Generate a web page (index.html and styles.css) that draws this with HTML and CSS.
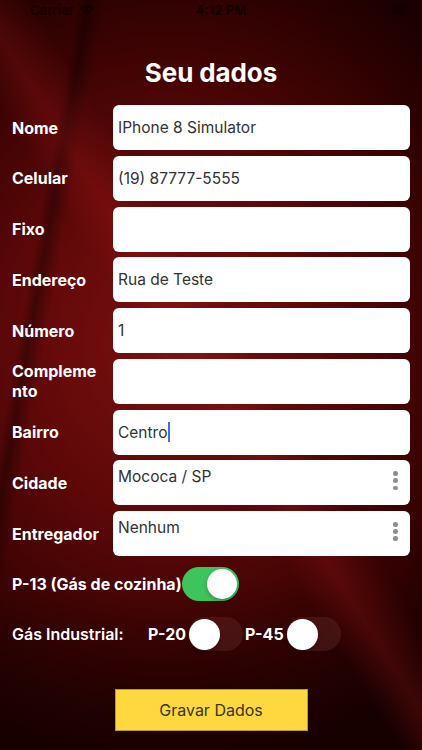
FILE: index.html
```html
<!DOCTYPE html>
<html lang="pt-BR">
<head>
    <meta charset="utf-8">
    <title>Seu dados</title>
    <link rel="stylesheet" href="styles.css">
</head>
<body>
    <div class="screen">
        <div class="status">
            <div class="carrier">Carrier
                <svg width="16" height="12" viewBox="0 0 16 12"><path d="M8 11.5l2.3-2.6a3.3 3.3 0 0 0-4.6 0z M3.9 7l1.3 1.4a4 4 0 0 1 5.6 0L12.1 7a5.9 5.9 0 0 0-8.2 0z M1.1 4.2l1.3 1.4a7.9 7.9 0 0 1 11.2 0l1.3-1.4a9.8 9.8 0 0 0-13.8 0z" fill="#160000"/></svg>
            </div>
            <div class="clock">4:12 PM</div>
            <div class="battery"><span></span></div>
        </div>

        <h2 class="title">Seu dados</h2>

        <div class="row"><label>Nome</label><div class="field">IPhone 8 Simulator</div></div>
        <div class="row"><label>Celular</label><div class="field">(19) 87777-5555</div></div>
        <div class="row"><label>Fixo</label><div class="field"></div></div>
        <div class="row"><label>Endereço</label><div class="field">Rua de Teste</div></div>
        <div class="row"><label>Número</label><div class="field">1</div></div>
        <div class="row"><label>Complemento</label><div class="field"></div></div>
        <div class="row"><label>Bairro</label><div class="field">Centro<i class="caret"></i></div></div>
        <div class="row"><label>Cidade</label><div class="field picker">Mococa / SP<b class="dots"><i></i><i></i><i></i></b></div></div>
        <div class="row"><label>Entregador</label><div class="field picker">Nenhum<b class="dots"><i></i><i></i><i></i></b></div></div>

        <div class="opt first">
            <span class="optlabel">P-13 (Gás de cozinha)</span>
            <span class="switch on"><i></i></span>
        </div>
        <div class="opt">
            <span class="optlabel wide">Gás Industrial:</span>
            <span class="optlabel">P-20</span>
            <span class="switch"><i></i></span>
            <span class="optlabel">P-45</span>
            <span class="switch"><i></i></span>
        </div>

        <div class="actions"><a class="btn">Gravar Dados</a></div>
    </div>
</body>
</html>
```

FILE: styles.css
```css
body { margin: 0; font-family: Inter, "Liberation Sans", sans-serif; }
.screen {
    width: 422px; height: 750px; overflow: hidden; box-sizing: border-box;
    background:
        linear-gradient(58deg, transparent 45%, rgba(170, 25, 25, 0.26) 50%, transparent 56%),
        linear-gradient(100deg, transparent 14%, rgba(0, 0, 0, 0.35) 16%, transparent 19%),
        linear-gradient(180deg, transparent 78%, rgba(20, 0, 0, 0.55) 100%),
        radial-gradient(ellipse 90% 58% at 40% 46%, #7c1010 0%, #5e0808 40%, #360202 75%, #1a0000 100%);
}
.status { height: 20px; display: flex; align-items: center; justify-content: space-between; padding: 0 10px 0 30px; color: #160000; font-size: 13px; font-weight: 600; }
.carrier { display: flex; align-items: center; gap: 5px; width: 120px; }
.clock { font-weight: 700; }
.battery { width: 120px; display: flex; justify-content: flex-end; }
.battery span { width: 18px; height: 8px; border: 1px solid rgba(20, 0, 0, 0.5); border-radius: 2px; background: linear-gradient(90deg, #140000 60%, transparent 60%); }

.title { margin: 38px 0 17px; height: 30px; line-height: 30px; text-align: center; color: #fff; font-size: 26px; font-weight: 700; letter-spacing: -0.1px; }

.row { display: flex; align-items: center; height: 45px; margin-bottom: 5.75px; }
.row label { width: 88px; margin: 0 13px 0 12px; color: #fff; font-size: 16px; font-weight: 700; line-height: 20px; word-break: break-all; }
.field { position: relative; width: 297px; height: 45px; box-sizing: border-box; padding: 0 5px; background: #fff; border-radius: 6px; display: flex; align-items: center; color: #333; font-size: 15.5px; }
.picker { align-items: flex-start; padding-top: 7px; }
.caret { display: inline-block; width: 2px; height: 20px; margin-left: 1px; background: #3d6fe8; }
.dots { position: absolute; right: 12px; top: 11px; display: flex; flex-direction: column; gap: 2.6px; }
.dots i { width: 4.6px; height: 4.6px; border-radius: 50%; background: #8e8e8e; }

.opt { display: flex; align-items: center; height: 34px; padding-left: 12px; margin-top: 16px; color: #fff; font-size: 16px; font-weight: 700; }
.opt.first { margin-top: 11px; }
.optlabel.wide { width: 136px; font-weight: 600; }
.switch { position: relative; width: 55px; height: 34px; border-radius: 17px; margin: 0 2px; background: rgba(110, 50, 50, 0.35); }
.switch i { position: absolute; left: 1px; top: 2px; width: 31px; height: 31px; border-radius: 50%; background: #fff; box-shadow: 0 2px 4px rgba(0, 0, 0, 0.25); }
.switch.on { width: 57px; background: #3ec45c; margin-left: 0; }
.switch.on i { left: auto; right: 2px; width: 30px; height: 30px; }

.actions { display: flex; justify-content: center; margin-top: 38px; }
.btn { width: 193px; height: 42px; box-sizing: border-box; border: 1px solid #b99a25; background: #fdd83f; color: #3b3515; font-size: 16px; display: flex; align-items: center; justify-content: center; }
```
